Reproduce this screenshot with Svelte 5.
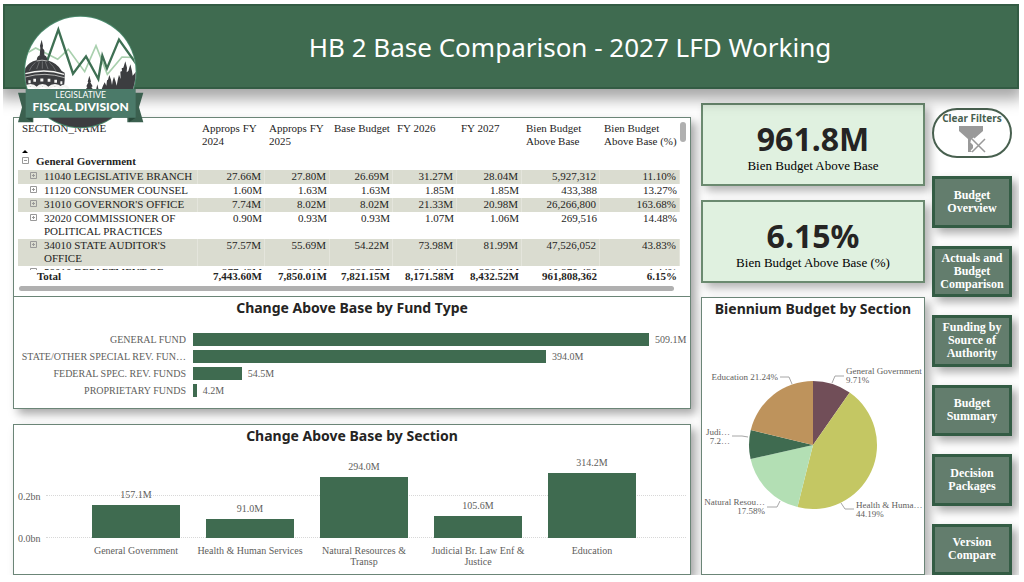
<script lang="ts">
    interface Row {
        name: string;
        values: string[];
    }

    interface Slice {
        value: number;
        color: string;
        line: string;
        x: number;
        y: number;
        anchor: "start" | "end";
        text: string[];
    }

    const columns = [
        "Approps FY 2024",
        "Approps FY 2025",
        "Base Budget",
        "FY 2026",
        "FY 2027",
        "Bien Budget Above Base",
        "Bien Budget Above Base (%)",
    ];
    const columnWidths = [180, 67, 65, 63, 64, 65, 78, 80];

    const rows: Row[] = [
        {
            name: "11040 LEGISLATIVE BRANCH",
            values: ["27.66M", "27.80M", "26.69M", "31.27M", "28.04M", "5,927,312", "11.10%"],
        },
        {
            name: "11120 CONSUMER COUNSEL",
            values: ["1.60M", "1.63M", "1.63M", "1.85M", "1.85M", "433,388", "13.27%"],
        },
        {
            name: "31010 GOVERNOR'S OFFICE",
            values: ["7.74M", "8.02M", "8.02M", "21.33M", "20.98M", "26,266,800", "163.68%"],
        },
        {
            name: "32020 COMMISSIONER OF POLITICAL PRACTICES",
            values: ["0.90M", "0.93M", "0.93M", "1.07M", "1.06M", "269,516", "14.48%"],
        },
        {
            name: "34010 STATE AUDITOR'S OFFICE",
            values: ["57.57M", "55.69M", "54.22M", "73.98M", "81.99M", "47,526,052", "43.83%"],
        },
        {
            name: "58010 DEPARTMENT OF REVENUE",
            values: ["277.43M", "286.41M", "280.27M", "294.46M", "296.34M", "10,270,430", "1.44%"],
        },
    ];

    const totals = [
        "7,443.60M",
        "7,850.01M",
        "7,821.15M",
        "8,171.58M",
        "8,432.52M",
        "961,808,362",
        "6.15%",
    ];

    const funds = [
        { name: "GENERAL FUND", value: 509.1 },
        { name: "STATE/OTHER SPECIAL REV. FUN…", value: 394.0 },
        { name: "FEDERAL SPEC. REV. FUNDS", value: 54.5 },
        { name: "PROPRIETARY FUNDS", value: 4.2 },
    ];
    const maxFund = 509.1;

    const sections = [
        { name: "General Government", value: 157.1 },
        { name: "Health & Human Services", value: 91.0 },
        { name: "Natural Resources & Transp", value: 294.0 },
        { name: "Judicial Br. Law Enf & Justice", value: 105.6 },
        { name: "Education", value: 314.2 },
    ];
    // top of the plot area is 0.4bn
    const axisMax = 400;

    const slices: Slice[] = [
        { value: 9.71, color: "#714e58", line: "130,43 133,36 142,36", x: 144, y: 34, anchor: "start", text: ["General Government", "9.71%"] },
        { value: 44.19, color: "#c4c763", line: "139,163 143,169 152,169", x: 154, y: 168, anchor: "start", text: ["Health & Huma…", "44.19%"] },
        { value: 17.58, color: "#b3dfb4", line: "78,161 75,167 65,167", x: 63, y: 165, anchor: "end", text: ["Natural Resou…", "17.58%"] },
        { value: 7.28, color: "#3f6b50", line: "46,97 40,96 30,96", x: 28, y: 95, anchor: "end", text: ["Judi…", "7.2…"] },
        { value: 21.24, color: "#be935c", line: "90,44 87,37 78,37", x: 76, y: 40, anchor: "end", text: ["Education 21.24%"] },
    ];

    const cx = 111;
    const cy = 105;
    const r = 64;

    function point(share: number) {
        const a = (share / 100) * 2 * Math.PI;
        return `${(cx + r * Math.sin(a)).toFixed(2)} ${(cy - r * Math.cos(a)).toFixed(2)}`;
    }

    function slicePath(i: number) {
        const start = slices.slice(0, i).reduce((sum, s) => sum + s.value, 0);
        const end = start + slices[i].value;
        return `M${cx} ${cy} L${point(start)} A${r} ${r} 0 0 1 ${point(end)} Z`;
    }

    const pages = [
        "Budget Overview",
        "Actuals and Budget Comparison",
        "Funding by Source of Authority",
        "Budget Summary",
        "Decision Packages",
        "Version Compare",
    ];
</script>

<div class="report">
    <header>
        <svg class="logo" viewBox="0 0 435 390" role="img" aria-label="Legislative Fiscal Division">
            <defs>
                <clipPath id="badge"><circle cx="211" cy="201" r="166" /></clipPath>
            </defs>
            <circle cx="211" cy="201" r="169" fill="#4b8a6d" />
            <g clip-path="url(#badge)">
                <rect x="40" y="30" width="345" height="225" fill="#fff" />
                <rect x="40" y="255" width="345" height="120" fill="#3c3d40" />
                <polyline points="45,148 77,129 143,163 175,133 224,200 258,122 292,208 336,156 385,158" fill="none" stroke="#a9d0ae" stroke-width="5" />
                <polyline points="112,166 145,74 189,206 228,154 265,222 277,152 291,190 327,104 385,185" fill="none" stroke="#3f7054" stroke-width="7" />
                <g fill="#3c3d40">
                    <path d="M89 152 L91 130 L90 122 L95 104 L99 122 L98 130 L103 136 L103 152 Z" />
                    <path d="M80 166 Q80 150 97 149 Q112 150 112 166 Q142 174 155 198 L164 203 L164 225 L162 246 L40 246 L40 200 Q52 172 80 166 Z" />
                    <path d="M226 255 L232 246 L229 244 L235 232 L233 230 L238 212 L243 230 L241 232 L248 244 L244 246 L250 255 Z" />
                    <path d="M258 255 L262 238 L266 255 Z" />
                    <path d="M274 255 L279 242 L284 232 L289 242 L291 226 L294 224 L298 210 L303 224 L306 240 L308 228 L312 215 L317 230 L320 242 L323 226 L327 209 L332 222 L331 200 L336 198 L335 190 L340 188 L346 169 L351 188 L350 202 L355 198 L361 178 L366 198 L368 212 L373 206 L378 200 L385 196 L385 255 Z" />
                </g>
                <g fill="none" stroke="#f4f4f2">
                    <path d="M46 206 Q105 189 162 208" stroke-width="4" />
                    <path d="M46 216 Q105 199 164 218" stroke-width="2" />
                    <path d="M80 168 Q96 163 112 168" stroke-width="2" />
                    <path d="M76 172 Q63 184 58 197 M88 170 L80 192 M97 169 V191 M106 170 L114 192 M118 172 Q131 184 137 197" stroke-width="2" stroke="#85878a" />
                    <path d="M55 230 h7 M70 226 h8 M91 225 h9 M113 226 h8 M133 229 h8 M151 233 h6" stroke-width="9" />
                    <path d="M42 250 Q62 232 80 250 M80 250 Q97 232 115 250 M115 250 Q135 232 154 250 M150 250 Q164 234 176 252" stroke-width="8" />
                </g>
            </g>
            <path d="M24 263 H70 V352 H24 L36 307 Z M352 263 H400 L387 307 L400 352 H352 Z" fill="#3b604f" />
            <path d="M47 338 H67 V352 Z M377 338 H357 V352 Z" fill="#294a3b" />
            <rect x="47" y="252" width="330" height="86" fill="#4b7a69" />
            <text x="212" y="280" class="logo-top">LEGISLATIVE</text>
            <text x="212" y="317" class="logo-name">FISCAL DIVISION</text>
        </svg>
        <h1>HB 2 Base Comparison - 2027 LFD Working</h1>
    </header>

    <main>
        <div class="charts">
            <div class="stack">
                <section class="panel matrix">
                    <div class="scroller">
                        <table>
                            <colgroup>
                                {#each columnWidths as width}
                                    <col style="width: {width}px" />
                                {/each}
                            </colgroup>
                            <thead>
                                <tr>
                                    <th scope="col">
                                        SECTION_NAME
                                        <svg class="sort" viewBox="0 0 8 4" aria-hidden="true"><path d="M0 4 L4 0 L8 4 Z" /></svg>
                                    </th>
                                    {#each columns as column}
                                        <th scope="col">{column}</th>
                                    {/each}
                                </tr>
                            </thead>
                            <tbody>
                                <tr class="group">
                                    <th scope="row">
                                        <div class="name">
                                            <button class="toggle" aria-label="Collapse General Government">
                                                <svg viewBox="0 0 7 7"><path d="M.5 .5 H6.5 V6.5 H.5 Z M2 3.5 H5" /></svg>
                                            </button>
                                            General Government
                                        </div>
                                    </th>
                                    <td colspan="7"></td>
                                </tr>
                                {#each rows as row}
                                    <tr class="item">
                                        <th scope="row">
                                            <div class="name">
                                                <button class="toggle" aria-label="Expand {row.name}">
                                                    <svg viewBox="0 0 7 7"><path d="M.5 .5 H6.5 V6.5 H.5 Z M2 3.5 H5 M3.5 2 V5" /></svg>
                                                </button>
                                                {row.name}
                                            </div>
                                        </th>
                                        {#each row.values as value}
                                            <td>{value}</td>
                                        {/each}
                                    </tr>
                                {/each}
                            </tbody>
                            <tfoot>
                                <tr>
                                    <th scope="row">Total</th>
                                    {#each totals as total}
                                        <td>{total}</td>
                                    {/each}
                                </tr>
                            </tfoot>
                        </table>
                        <div class="bar-y"></div>
                    </div>
                    <div class="bar-x"></div>
                </section>

                <section class="panel funds">
                    <h2>Change Above Base by Fund Type</h2>
                    <ul>
                        {#each funds as fund}
                            <li>
                                <span class="fund-name">{fund.name}</span>
                                <div class="track">
                                    <div class="fund-bar" style="width: {(fund.value / maxFund) * 100}%"></div>
                                    <span>{fund.value.toFixed(1)}M</span>
                                </div>
                            </li>
                        {/each}
                    </ul>
                </section>
            </div>

            <section class="panel sections">
                <h2>Change Above Base by Section</h2>
                <div class="plot">
                    <div class="axis">
                        <span>0.2bn</span>
                        <span>0.0bn</span>
                    </div>
                    <div class="grid-lines"></div>
                    <div class="bars">
                        {#each sections as section}
                            <div class="bar-col">
                                <span>{section.value.toFixed(1)}M</span>
                                <div class="bar" style="height: {(section.value / axisMax) * 100}%"></div>
                            </div>
                        {/each}
                    </div>
                    <div class="bar-names">
                        {#each sections as section}
                            <span>{section.name}</span>
                        {/each}
                    </div>
                </div>
            </section>
        </div>

        <div class="summary">
            <section class="kpi">
                <strong>961.8M</strong>
                <span>Bien Budget Above Base</span>
            </section>
            <section class="kpi">
                <strong>6.15%</strong>
                <span>Bien Budget Above Base (%)</span>
            </section>
            <section class="panel pie">
                <h2>Biennium Budget by Section</h2>
                <svg viewBox="0 0 222 200">
                    {#each slices as slice, i}
                        <path d={slicePath(i)} fill={slice.color} />
                        <polyline points={slice.line} />
                        <text x={slice.x} y={slice.y} text-anchor={slice.anchor}>
                            {#each slice.text as line, n}
                                <tspan x={slice.x} dy={n * 9}>{line}</tspan>
                            {/each}
                        </text>
                    {/each}
                </svg>
            </section>
        </div>

        <nav>
            <button class="clear">
                Clear Filters
                <svg viewBox="0 0 28 28" aria-hidden="true">
                    <path d="M1 1 H25 V6 L17 13 L12 17 L15 20 V27 H10 V14 L1 6 Z" fill="#999" />
                    <path d="M14 14 L27 27 M27 14 L14 27" stroke="#fff" stroke-width="4" />
                    <path d="M14 14 L27 27 M27 14 L14 27" stroke="#999" stroke-width="1.5" />
                </svg>
            </button>
            {#each pages as page}
                <button class="page">{page}</button>
            {/each}
        </nav>
    </main>
</div>

<style>
    :global(body) {
        margin: 0;
        background: #fff;
    }

    .report {
        margin: 4px 5px 0 3px;
        overflow: hidden;
        font-family: "Liberation Serif", "Times New Roman", serif;
        color: #252423;
    }

    h1,
    h2,
    ul {
        margin: 0;
        padding: 0;
    }

    button {
        font-family: inherit;
        cursor: pointer;
    }

    header {
        position: relative;
        display: flex;
        align-items: center;
        justify-content: center;
        height: 85px;
        padding-left: 118px;
        box-sizing: border-box;
        background: #3f6b50;
        border: 2px solid #335c44;
        box-shadow: 0 6px 14px 4px rgba(0, 0, 0, 0.35);
    }

    h1 {
        color: #fff;
        font-family: "Noto Sans", "Segoe UI", sans-serif;
        font-size: 26px;
        font-weight: 400;
        line-height: 36px;
    }

    .logo {
        position: absolute;
        top: -1px;
        left: 5px;
        z-index: 2;
        width: 145px;
        height: 130px;
    }

    .logo-top,
    .logo-name {
        fill: #fff;
        font-family: Lato, sans-serif;
        text-anchor: middle;
    }

    .logo-top {
        font-size: 26px;
    }

    .logo-name {
        font-size: 36px;
        font-weight: 900;
    }

    main {
        display: grid;
        grid-template-columns: minmax(0, 1fr) 224px 80px;
        column-gap: 7px;
        padding: 14px 7px 0 10px;
    }

    .charts {
        display: flex;
        flex-direction: column;
        gap: 15px;
        margin-right: 3px;
        padding-top: 14px;
    }

    .stack {
        box-shadow: 5px 5px 9px rgba(0, 0, 0, 0.35);
    }

    .panel {
        box-sizing: border-box;
        background: #fff;
        border: 1px solid #6b8577;
    }

    h2 {
        font-family: "Noto Sans", "Segoe UI", sans-serif;
        font-size: 14px;
        font-weight: 700;
        line-height: 22px;
        text-align: center;
    }

    .matrix {
        padding: 4px 4px 5px;
        border-bottom: 0;
    }

    .scroller {
        display: flex;
        height: 163px;
        overflow: hidden;
    }

    table {
        flex: 1;
        min-width: 0;
        height: max-content;
        table-layout: fixed;
        border-collapse: separate;
        border-spacing: 0;
        font-size: 11px;
        line-height: 13px;
    }

    th {
        padding: 0 0 0 4px;
        font-weight: 400;
        text-align: left;
        vertical-align: top;
    }

    td {
        padding: 0 3px;
        text-align: right;
        vertical-align: top;
    }

    thead th {
        height: 33px;
    }

    .sort {
        display: block;
        width: 6px;
        height: 3px;
        margin-top: 15px;
    }

    .group th {
        padding-bottom: 2px;
        font-weight: 700;
    }

    .name {
        display: flex;
        gap: 7px;
    }

    .item th {
        padding-left: 12px;
    }

    .item th,
    .item td {
        padding-bottom: 1px;
    }

    .item:nth-child(even) th,
    .item:nth-child(even) td {
        background: #dadcd0;
        border-right: 1px solid #e4e5dc;
    }

    .toggle {
        flex: none;
        width: 7px;
        height: 7px;
        margin-top: 2px;
        padding: 0;
        background: none;
        border: 0;
    }

    .toggle svg {
        display: block;
        fill: none;
        stroke: #999;
        stroke-width: 1;
    }

    tfoot th,
    tfoot td {
        position: sticky;
        bottom: 0;
        padding-bottom: 2px;
        background: #fff;
        font-weight: 700;
    }

    tfoot th {
        padding-left: 19px;
    }

    .bar-y {
        width: 6px;
        height: 20px;
        border-radius: 3px;
        background: #b0b0b0;
    }

    .bar-x {
        height: 5px;
        margin: 1px 12px 0 1px;
        border-radius: 3px;
        background: #b0b0b0;
    }

    .funds {
        padding-bottom: 11px;
    }

    .funds ul {
        display: flex;
        flex-direction: column;
        gap: 4px;
        padding-top: 14px;
        list-style: none;
    }

    .funds li {
        display: flex;
        gap: 7px;
        height: 13px;
        font-size: 10px;
        line-height: 13px;
        color: #605e5c;
    }

    .fund-name {
        width: 172px;
        text-align: right;
        white-space: nowrap;
    }

    .track {
        display: flex;
        flex: 1;
        gap: 6px;
        margin-right: 41px;
    }

    .fund-bar {
        flex: none;
        background: #3f6b50;
    }

    .sections {
        padding: 0 4px;
        box-shadow: 5px 5px 9px rgba(0, 0, 0, 0.35);
    }

    .plot {
        display: grid;
        grid-template-columns: 28px minmax(0, 1fr);
        grid-template-rows: 83px 36px;
        padding-top: 8px;
        font-size: 10px;
        line-height: 11px;
        color: #605e5c;
    }

    .axis {
        display: flex;
        flex-direction: column;
        gap: 31px;
        padding-top: 36px;
    }

    .grid-lines {
        grid-area: 1 / 2;
        height: 41px;
        align-self: end;
        border-top: 1px dotted #d8d8d8;
        border-bottom: 1px dotted #d8d8d8;
    }

    .bars,
    .bar-names {
        display: grid;
        grid-template-columns: repeat(5, minmax(0, 1fr));
        padding: 0 37px 0 33px;
        text-align: center;
    }

    .bars {
        grid-area: 1 / 2;
        z-index: 1;
    }

    .bar-col {
        display: flex;
        flex-direction: column;
        align-items: center;
        justify-content: end;
        gap: 5px;
    }

    .bar {
        flex: none;
        width: 78%;
        background: #3f6b50;
    }

    .bar-names {
        grid-area: 2 / 2;
        padding-top: 7px;
    }

    .bar-names span {
        padding: 0 3px;
    }

    .summary {
        display: flex;
        flex-direction: column;
        gap: 14px;
    }

    .kpi {
        display: flex;
        flex-direction: column;
        align-items: center;
        height: 83px;
        box-sizing: border-box;
        padding-top: 15px;
        background: #e0f1e0;
        border: 2px solid #6b8a70;
        box-shadow: 5px 5px 9px rgba(0, 0, 0, 0.3);
    }

    .kpi strong {
        font-family: "Noto Sans", "Segoe UI", sans-serif;
        font-size: 32px;
        line-height: 38px;
    }

    .kpi span {
        font-size: 13px;
        line-height: 16px;
        color: #000;
    }

    .pie {
        flex: 1;
        box-shadow: 5px 5px 9px rgba(0, 0, 0, 0.3);
    }

    .pie svg {
        display: block;
        margin-top: 20px;
    }

    .pie polyline {
        fill: none;
        stroke: #a6a6a6;
    }

    .pie text {
        font-size: 9px;
        fill: #605e5c;
    }

    nav {
        display: flex;
        flex-direction: column;
        gap: 18px;
        padding-top: 5px;
    }

    .clear {
        display: flex;
        flex-direction: column;
        align-items: center;
        height: 50px;
        padding: 1px 0 0;
        background: #fff;
        border: 2px solid #48604f;
        border-radius: 25px;
        color: #48604f;
        font-family: "Noto Sans", "Segoe UI", sans-serif;
        font-size: 10px;
        font-weight: 700;
        line-height: 14px;
        white-space: nowrap;
    }

    .clear svg {
        width: 28px;
        height: 28px;
        fill: none;
    }

    .page {
        flex: 1;
        padding: 0 4px;
        background: #637d6d;
        border: 3px solid #335c44;
        box-shadow: 5px 5px 9px rgba(0, 0, 0, 0.35);
        color: #fff;
        font-size: 12px;
        font-weight: 700;
        line-height: 13px;
    }
</style>
